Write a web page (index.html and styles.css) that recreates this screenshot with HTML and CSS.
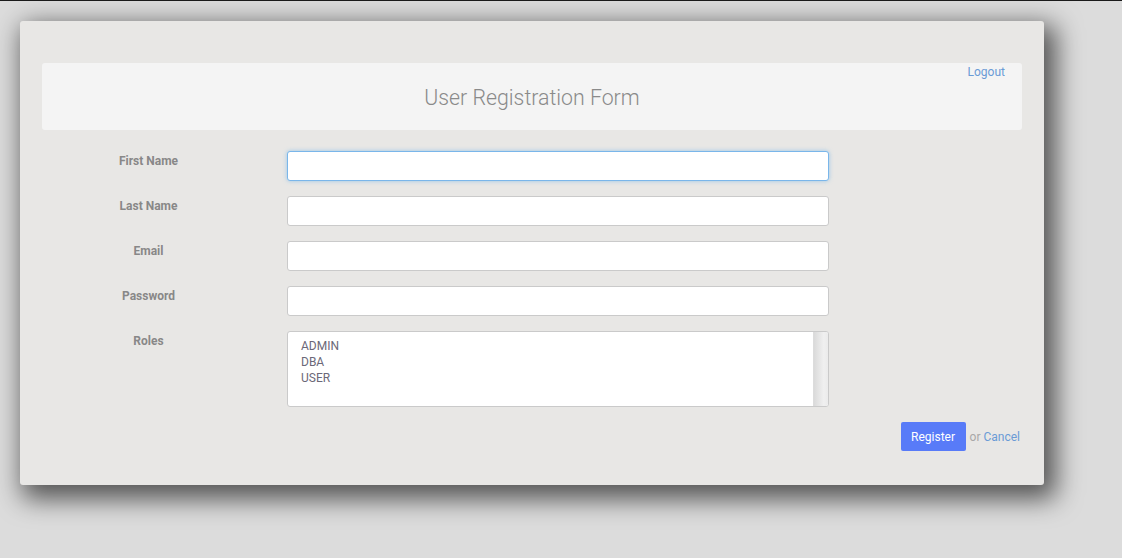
FILE: index.html
```html
<!DOCTYPE html>
<html lang="en">
<head>
<meta charset="utf-8">
<title>User Registration Form</title>
<link rel="stylesheet" href="styles.css">
</head>
<body>
<div class="page">
  <div class="card">
    <div class="panel-head">
      <div class="logout-row"><a class="link" href="#">Logout</a></div>
      <h1 class="title">User Registration Form</h1>
    </div>
    <form class="form">
      <div class="row">
        <label class="label" for="fn">First Name</label>
        <input class="input focused" id="fn" type="text" autofocus>
      </div>
      <div class="row">
        <label class="label" for="ln">Last Name</label>
        <input class="input" id="ln" type="text">
      </div>
      <div class="row">
        <label class="label" for="em">Email</label>
        <input class="input" id="em" type="email">
      </div>
      <div class="row">
        <label class="label" for="pw">Password</label>
        <input class="input" id="pw" type="password">
      </div>
      <div class="row">
        <label class="label">Roles</label>
        <div class="listbox" role="listbox" aria-multiselectable="true">
          <div class="options">
            <div class="option" role="option">ADMIN</div>
            <div class="option" role="option">DBA</div>
            <div class="option" role="option">USER</div>
          </div>
          <div class="scrolltrack"></div>
        </div>
      </div>
      <div class="actions">
        <button class="btn" type="button">Register</button>
        <span class="or">or</span>
        <a class="link" href="#">Cancel</a>
      </div>
    </form>
  </div>
</div>
</body>
</html>
```
FILE: styles.css
```css
html, body {
  margin: 0;
  padding: 0;
}
body {
  background: #dcdcdc;
  border-top: 1px solid #1a1a1a;
  font-family: Roboto, "Liberation Sans", Arial, sans-serif;
  min-height: 557px;
}
.page {
  padding: 20px 78px 0 20px;
}
.card {
  width: 1024px;
  box-sizing: border-box;
  background: #e8e7e5;
  border-radius: 3px;
  padding: 42px 22px 34px 22px;
  box-shadow: 7px 9px 26px 5px rgba(0, 0, 0, 0.62);
}
.panel-head {
  background: #f4f4f4;
  border-radius: 3px;
  height: 67px;
  box-sizing: border-box;
  padding: 2px 17px 0 17px;
}
.logout-row {
  text-align: right;
  font-size: 12px;
  line-height: 15px;
}
.link {
  color: #6a9bd6;
  text-decoration: none;
  font-size: 12px;
}
.title {
  margin: 5px 0 0 0;
  text-align: center;
  font-size: 21.3px;
  line-height: 25px;
  font-weight: 300;
  color: #8a8a8a;
}
.form {
  padding-top: 21px;
}
.row {
  display: grid;
  grid-template-columns: 213px 542px;
  column-gap: 32px;
  margin-bottom: 15px;
}
.label {
  text-align: center;
  font-size: 12px;
  font-weight: bold;
  color: #888;
  padding-top: 3px;
  line-height: 15px;
}
.input {
  height: 30px;
  box-sizing: border-box;
  border: 1px solid #cacaca;
  border-radius: 3px;
  background: #fff;
  padding: 0 10px;
  font-family: inherit;
  font-size: 13px;
  color: #555;
  margin: 0;
  outline: none;
}
.input.focused {
  border-color: #7ab6ea;
  box-shadow: 0 0 4px rgba(102, 175, 233, 0.6);
}
.listbox {
  height: 76px;
  box-sizing: border-box;
  border: 1px solid #cacaca;
  border-radius: 3px;
  background: #fff;
  display: flex;
  overflow: hidden;
}
.options {
  flex: 1;
  padding: 6px 13px;
}
.option {
  font-size: 12px;
  line-height: 16px;
  color: #6b6878;
}
.scrolltrack {
  width: 14px;
  border-left: 1px solid #dcdcdc;
  background: linear-gradient(to right, #dadada, #f0f0f0 70%, #ebebeb);
}
.actions {
  display: flex;
  justify-content: flex-end;
  align-items: center;
  padding-right: 2px;
  margin-top: 1px;
}
.btn {
  width: 65px;
  height: 29px;
  border: none;
  border-radius: 2px;
  background: #587bf8;
  color: #fff;
  font-family: inherit;
  font-size: 12px;
  padding: 0;
  margin-right: 4px;
}
.or {
  color: #a8a8a8;
  font-size: 12px;
  margin-right: 3px;
}
```
